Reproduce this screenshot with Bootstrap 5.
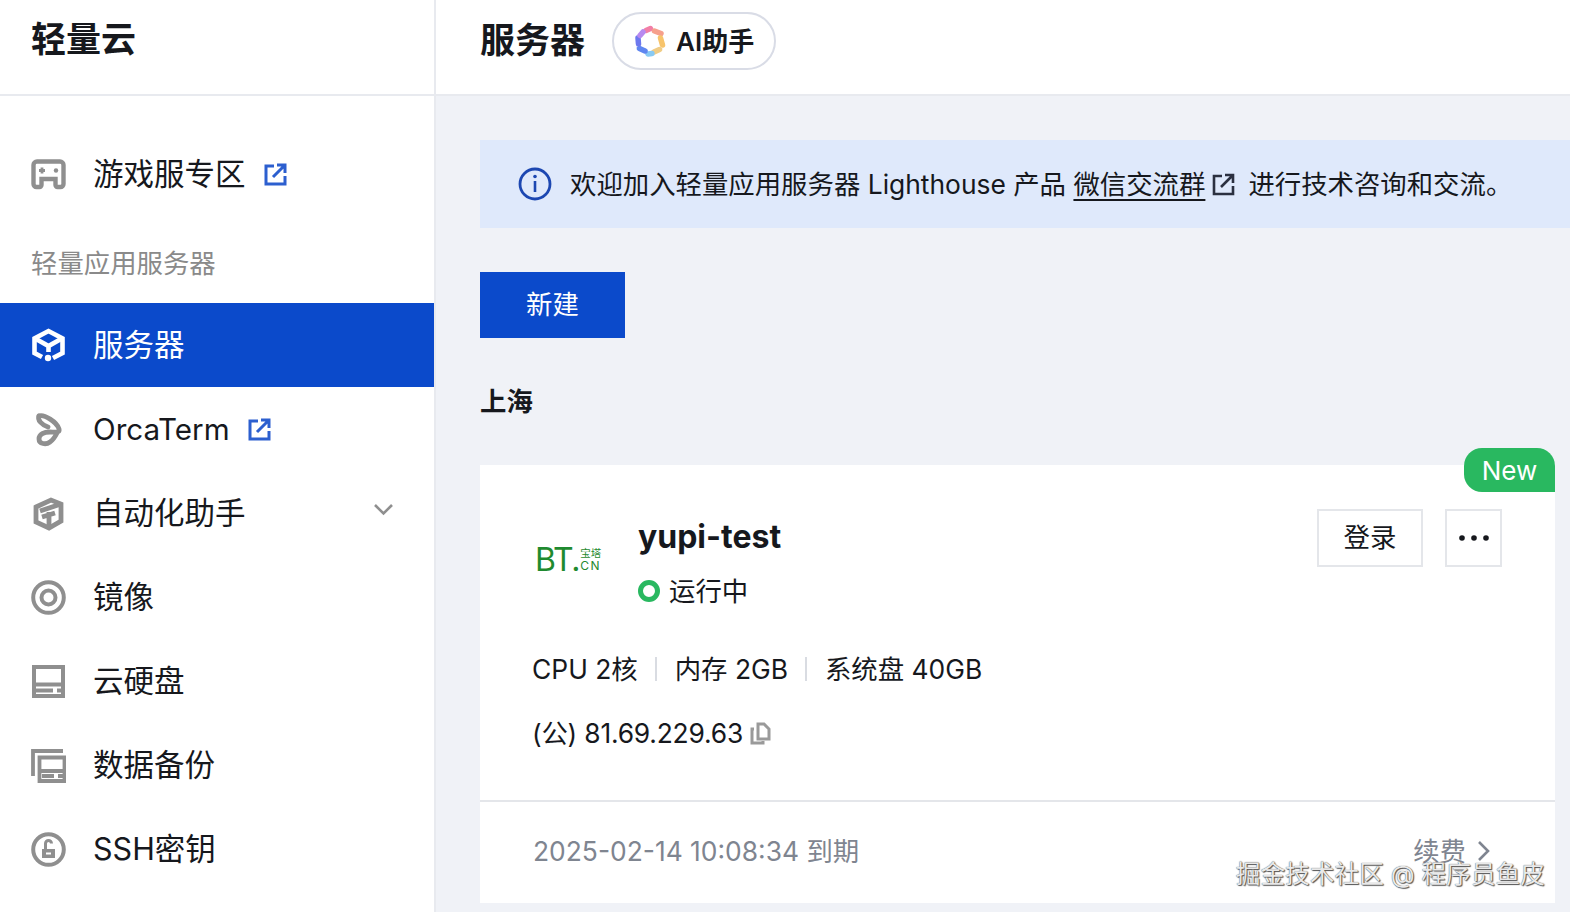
<!DOCTYPE html>
<html lang="zh">
<head>
  <meta charset="UTF-8">
  <meta name="viewport" content="width=device-width, initial-scale=1.0">
  <title>轻量云</title>
  <link href="https://cdn.jsdelivr.net/npm/bootstrap@5.3.0/dist/css/bootstrap.min.css" rel="stylesheet">
  <style>
    html, body { height: 100%; }
    body { font-family: Inter, "Noto Sans CJK SC", sans-serif; color: #16181d; background: #f0f2f7; overflow: hidden; width: 1570px; height: 912px; }
    .app-shell { height: 912px; }
    .side-panel { width: 436px; flex: none; background: #fff; border-right: 2px solid #e8eaef; }
    .side-head { height: 96px; border-bottom: 2px solid #e8eaef; padding-left: 31px; font-size: 35px; font-weight: 700; line-height: 78px; }
    .side-list { padding-top: 36px; }
    .side-item { height: 84px; padding-left: 31px; font-size: 30.5px; color: #16181d; text-decoration: none; }
    .side-item svg.ico { width: 35px; height: 35px; flex: none; margin-right: 27px; color: #8f8f8f; }
    .side-item.is-on { background: #0b4acb; color: #fff; }
    .side-item.is-on svg.ico { color: #fff; }
    .side-label { height: 87px; padding: 23px 0 0 31px; font-size: 26.4px; color: #8a8a8a; line-height: 48px; }
    .orca-name { font-size: 29.6px; }
    .ext-ico { width: 23px; height: 23px; margin-left: 18px; color: #2c5fcf; }
    .chev { margin-left: auto; margin-right: 40px; width: 21px; height: 14px; color: #8f8f8f; margin-top: -8px; }
    .top-bar { height: 96px; background: #fff; border-bottom: 2px solid #e8eaef; padding-left: 44px; }
    .page-title { font-size: 35px; font-weight: 700; margin-right: 27px; position: relative; top: -7px; }
    .ai-pill { width: 164px; height: 58px; border: 2px solid #d9dce6; border-radius: 29px; background: #fff; font-size: 26px; font-weight: 600; padding-left: 20px; position: relative; top: -6px; }
    .ai-pill svg { width: 32px; height: 32px; margin-right: 10px; }
    .page-body { padding: 44px 0 0 44px; }
    .tip-bar { height: 88px; background: #dfe9fb; padding-left: 38px; font-size: 26.4px; white-space: nowrap; }
    .tip-bar span { position: relative; top: 1px; }
    .tip-bar svg.info { width: 34px; height: 34px; margin-right: 18px; color: #1c47b1; flex: none; }
    .tip-bar u { text-underline-offset: 5px; text-decoration-thickness: 2px; }
    .tip-ext { width: 23px; height: 23px; margin: 0 13px 0 7px; color: #2b3040; }
    .new-btn { width: 145px; height: 66px; background: #0b4acb; color: #fff; border: 0; border-radius: 0; font-size: 26.4px; margin-top: 44px; }
    .region-name { font-size: 26.4px; font-weight: 700; margin: 44px 0 45px; line-height: 38px; height: 38px; }
    .host-card { width: 1075px; background: #fff; position: relative; height: 438px; }
    .new-tag { position: absolute; right: 0; top: -17px; width: 91px; height: 44px; background: #29b860; color: #fff; font-size: 26px; border-radius: 18px 18px 0 18px; }
    .host-main { height: 337px; padding: 44px 53px 0 53px; border-bottom: 2px solid #e4e6ea; }
    .bt-logo { width: 105px; color: #1f8a2f; padding-top: 33px; padding-left: 2px; }
    .bt-big { font-size: 32px; line-height: 36px; font-weight: 400; letter-spacing: -1.2px; }
    .bt-small { font-size: 10.5px; line-height: 12px; font-weight: 400; margin-left: 1px; }
    .bt-cn { font-size: 12px; letter-spacing: 1.500px; display: block; }
    .host-name { font-size: 32px; font-weight: 700; line-height: 54px; margin-top: 1px; }
    .status-row { font-size: 26.4px; line-height: 44px; margin-top: 5px; }
    .status-ring { width: 22px; height: 22px; border: 5.500px solid #29b860; border-radius: 50%; margin-right: 9px; flex: none; }
    .act-btn { height: 58px; border: 2px solid #e4e6ea; background: #fff; border-radius: 0; font-size: 26.4px; padding: 0; color: #16181d; }
    .act-row { gap: 22px; }
    .spec-row { font-size: 26.4px; margin-top: 36px; line-height: 40px; margin-left: -1px; }
    .spec-sep { width: 2px; height: 24px; background: #d9dce2; margin: 0 17.500px; }
    .ip-row { font-size: 26.4px; margin-top: 24px; line-height: 40px; margin-left: -1px; letter-spacing: -.2px; }
    .copy-ico { width: 21px; height: 23px; margin-left: 7px; color: #9a9a9a; }
    .host-foot { height: 99px; padding: 0 64px 0 53px; font-size: 26.4px; color: #7f8590; }
    .host-foot svg { width: 14px; height: 22px; margin-left: 11px; }
    .watermark { position: absolute; right: 25px; top: 855px; font-size: 24.7px; line-height: 38px; color: #e9e9e9; text-shadow: 0 0 1px #333, 1px 1px 1px #555; white-space: nowrap; }
  </style>
</head>
<body>
  <div class="app-shell d-flex">
    <aside class="side-panel">
      <div class="side-head">轻量云</div>
      <div class="side-list">
        <a class="side-item d-flex align-items-center" href="#">
          <svg class="ico" viewBox="0 0 35 35" fill="none" stroke="currentColor" stroke-width="4.400"><path d="M6 4.500h23a3.500 3.500 0 0 1 3.500 3.500v19a3 3 0 0 1-3 3h-3a2 2 0 0 1-2-2v-6h-14v6a2 2 0 0 1-2 2h-3a3 3 0 0 1-3-3V8A3.500 3.500 0 0 1 6 4.500z"/><path d="M8 13.500h6M11 10.500v6" stroke-width="2.800"/><circle cx="25" cy="13.500" r="2.200" fill="currentColor" stroke="none"/></svg>
          <span>游戏服专区</span>
          <svg class="ext-ico" viewBox="0 0 23 23" fill="none" stroke="currentColor" stroke-width="3"><path d="M10 3H2v18h19v-8"/><path d="M9 14 20 3M13 2h8v8"/></svg>
        </a>
        <div class="side-label">轻量应用服务器</div>
        <a class="side-item is-on d-flex align-items-center" href="#">
          <svg class="ico" viewBox="0 0 35 35" fill="none" stroke="currentColor" stroke-width="4.600"><path d="M11 29 3.500 25V10.500L17.500 3 31.500 10.500V25L22 30"/><path d="M5 11l12.500 7L30 11M17.500 18v6"/><circle cx="17" cy="30" r="3.200" fill="currentColor" stroke="none"/></svg>
          <span>服务器</span>
        </a>
        <a class="side-item d-flex align-items-center" href="#">
          <svg class="ico" viewBox="0 0 35 35" fill="none" stroke="currentColor" stroke-width="4.800" stroke-linecap="round"><path d="M8 4c5-2 18 6 20 13 1 4-4 3-9 3-6 0-11 2-11 7 0 5 7 6 11 3 3-2 5-5 7-9"/><path d="M8 4c-2 4 3 9 9 11"/></svg>
          <span class="orca-name">OrcaTerm</span>
          <svg class="ext-ico" viewBox="0 0 23 23" fill="none" stroke="currentColor" stroke-width="3"><path d="M10 3H2v18h19v-8"/><path d="M9 14 20 3M13 2h8v8"/></svg>
        </a>
        <a class="side-item d-flex align-items-center" href="#">
          <svg class="ico" viewBox="0 0 35 35" fill="none" stroke="currentColor" stroke-width="4.800"><path d="M5 11 20 4l10 4v17l-12 7-13-6z"/><path d="M9 15l21-7M18 16v16M11 21l13-4"/></svg>
          <span>自动化助手</span>
          <svg class="chev" viewBox="0 0 21 14" fill="none" stroke="currentColor" stroke-width="2.600"><path d="M2 3l8.500 8.500L19 3"/></svg>
        </a>
        <a class="side-item d-flex align-items-center" href="#">
          <svg class="ico" viewBox="0 0 35 35" fill="none" stroke="currentColor"><circle cx="17.500" cy="17.500" r="15.300" stroke-width="4"/><circle cx="17.500" cy="17.500" r="7" stroke-width="4"/></svg>
          <span>镜像</span>
        </a>
        <a class="side-item d-flex align-items-center" href="#">
          <svg class="ico" viewBox="0 0 35 35" fill="none" stroke="currentColor" stroke-width="4"><path d="M3 3h29v29H3zM3 20.500h29"/><path d="M4 26.500h18M26 26.500h5"/></svg>
          <span>云硬盘</span>
        </a>
        <a class="side-item d-flex align-items-center" href="#">
          <svg class="ico" viewBox="0 0 35 35" fill="none" stroke="currentColor" stroke-width="3.800"><path d="M2 28V3h30"/><path d="M8.500 9.500h25V33h-25zM8.500 23h25"/><path d="M11 28h12M27 28h5"/></svg>
          <span>数据备份</span>
        </a>
        <a class="side-item d-flex align-items-center" href="#">
          <svg class="ico" viewBox="0 0 35 35" fill="none" stroke="currentColor"><circle cx="17.500" cy="17.500" r="15.300" stroke-width="4"/><path d="M11 17h13v9H11z" fill="currentColor" stroke="none"/><path d="M14.500 17v-5.500a3 3 0 0 1 6 0" stroke-width="3"/><path d="M15 21.500h5" stroke="#fff" stroke-width="2"/></svg>
          <span>SSH密钥</span>
        </a>
      </div>
    </aside>
    <main class="flex-grow-1">
      <div class="top-bar d-flex align-items-center">
        <div class="page-title">服务器</div>
        <div class="ai-pill d-flex align-items-center">
          <svg viewBox="0 0 32 32" fill="none" stroke-width="5.500" stroke-linecap="round" stroke-linejoin="round">
            <path d="M12 5.500 16.500 3.500" stroke="#f27fa6"/><path d="M20.500 6 27 8.500" stroke="#f6a08c"/><path d="M26.500 13 28.500 20" stroke="#f7c46c"/><path d="M25.500 24.500 20 27" stroke="#f0cc85"/><path d="M18 28.500 14 29" stroke="#88caf4"/><path d="M11 26 5.500 23.500" stroke="#5f86f0"/><path d="M4.500 19 4 13" stroke="#6d78ee"/><path d="M6 10.500 9 7" stroke="#b88af0"/>
          </svg>
          <span>AI助手</span>
        </div>
      </div>
      <div class="page-body">
        <div class="tip-bar d-flex align-items-center">
          <svg class="info" viewBox="0 0 34 34" fill="none" stroke="currentColor" stroke-width="2.800"><circle cx="17" cy="17" r="15"/><path d="M17 14v11" stroke-width="2.600"/><circle cx="17" cy="9.500" r="1.800" fill="currentColor" stroke="none"/></svg>
          <span>欢迎加入轻量应用服务器 Lighthouse 产品 <u>微信交流群</u></span>
          <svg class="tip-ext" viewBox="0 0 23 23" fill="none" stroke="currentColor" stroke-width="2.600"><path d="M10 3H2v18h19v-8"/><path d="M9 14 20 3M13 2h8v8"/></svg>
          <span>进行技术咨询和交流。</span>
        </div>
        <button class="new-btn btn d-block" type="button">新建</button>
        <div class="region-name">上海</div>
        <div class="host-card">
          <div class="new-tag d-flex align-items-center justify-content-center">New</div>
          <div class="host-main">
            <div class="d-flex align-items-start">
              <div class="bt-logo d-flex align-items-center">
                <span class="bt-big">BT.</span>
                <span class="bt-small">宝塔<span class="bt-cn">CN</span></span>
              </div>
              <div>
                <div class="host-name">yupi-test</div>
                <div class="status-row d-flex align-items-center"><span class="status-ring"></span>运行中</div>
              </div>
              <div class="ms-auto d-flex act-row">
                <button class="act-btn btn" type="button" style="width:106px">登录</button>
                <button class="act-btn btn d-flex align-items-center justify-content-center" type="button" style="width:57px"><svg width="30" height="6" viewBox="0 0 30 6" fill="#16181d"><circle cx="3" cy="3" r="2.800"/><circle cx="15" cy="3" r="2.800"/><circle cx="27" cy="3" r="2.800"/></svg></button>
              </div>
            </div>
            <div class="spec-row d-flex align-items-center">
              <span>CPU 2核</span><span class="spec-sep"></span><span>内存 2GB</span><span class="spec-sep"></span><span>系统盘 40GB</span>
            </div>
            <div class="ip-row d-flex align-items-center">
              <span>(公) 81.69.229.63</span>
              <svg class="copy-ico" viewBox="0 0 21 23" fill="none" stroke="currentColor" stroke-width="3"><path d="M8 2h6l5 5v10H8z"/><path d="M4 7H2v14h11v-2"/></svg>
            </div>
          </div>
          <div class="host-foot d-flex align-items-center justify-content-between">
            <span>2025-02-14 10:08:34 到期</span>
            <span class="d-flex align-items-center">续费<svg viewBox="0 0 14 22" fill="none" stroke="currentColor" stroke-width="2.600"><path d="M2 2l9 9-9 9"/></svg></span>
          </div>
        </div>
      </div>
    </main>
  </div>
  <div class="watermark">掘金技术社区 @ 程序员鱼皮</div>
  <script src="https://cdn.jsdelivr.net/npm/bootstrap@5.3.0/dist/js/bootstrap.bundle.min.js"></script>
</body>
</html>
